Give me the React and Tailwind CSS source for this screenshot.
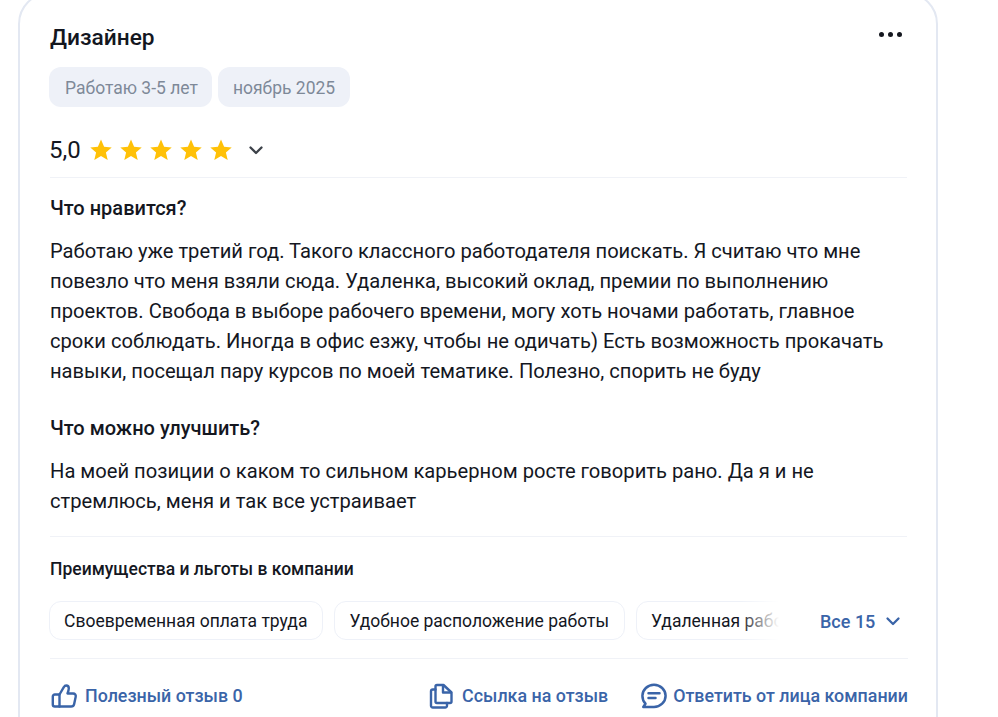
import React from 'react';

const Star = () => (
  <svg width="24" height="24" viewBox="0 0 24 24" className="block">
    <path d="M12 1.600l3.100 7.200 7.600.7-5.800 5 1.800 7.600L12 18.100l-6.700 4 1.800-7.600-5.800-5 7.600-.7z" fill="#ffc107" />
  </svg>
);

const Chevron = ({ color, size = 18 }) => (
  <svg width={size} height={size} viewBox="0 0 18 18" fill="none" className="block">
    <path d="M3.500 6.500L9 12l5.500-5.500" stroke={color} strokeWidth="2.300" strokeLinecap="round" strokeLinejoin="round" />
  </svg>
);

const ThumbIcon = () => (
  <svg width="28" height="28" viewBox="0 0 28 28" fill="none" stroke="#3a64a8" strokeWidth="2.400" strokeLinejoin="round" strokeLinecap="round" className="block">
    <path d="M9.500 12.500v12H4.800a2 2 0 0 1-2-2v-8a2 2 0 0 1 2-2z" />
    <path d="M9.500 12.500l4.300-7.300c.6-1.100 1.500-1.700 2.400-1.700 1.500 0 2.600 1.200 2.600 2.800 0 1.700-.7 3.700-1.300 5.200h5.700c1.800 0 2.900 1.500 2.500 3.200l-1.600 7.500c-.4 1.700-1.700 2.300-3 2.300H9.500" />
  </svg>
);

const CopyIcon = () => (
  <svg width="26" height="26" viewBox="0 0 26 26" fill="none" stroke="#3a64a8" strokeWidth="2.400" strokeLinejoin="round" strokeLinecap="round" className="block">
    <path d="M9 2h6.500L23.500 9.500v9a1.500 1.500 0 0 1-1.500 1.500H9A1.500 1.500 0 0 1 7.500 18.500V3.500A1.500 1.500 0 0 1 9 2z" />
    <path d="M15 2.500v7h8" />
    <path d="M7.500 6.500H4.800A1.800 1.800 0 0 0 3 8.300v14.400A1.800 1.800 0 0 0 4.800 24.500h12.400a1.800 1.800 0 0 0 1.800-1.800V20" />
  </svg>
);

const ChatIcon = () => (
  <svg width="26" height="26" viewBox="0 0 26 26" fill="none" className="block">
    <path d="M13 1.800c6.300 0 11.600 4.900 11.600 11S19.300 24 13 24H2.300l2.200-3.300C2.600 18.800 1.400 16 1.400 12.800 1.400 6.700 6.700 1.800 13 1.800z" stroke="#3a64a8" strokeWidth="2.500" strokeLinejoin="round" />
    <path d="M7.500 10.300h11M7.500 15h7" stroke="#3a64a8" strokeWidth="2.500" strokeLinecap="round" />
  </svg>
);

const perks = ['Своевременная оплата труда', 'Удобное расположение работы', 'Удаленная работа'];

const App = () => {
  return (
    <div className="h-[717px] overflow-hidden bg-white font-['Roboto',sans-serif] text-[#14171f]">
      <div className="ml-[18px] -mt-[8px] w-[920px] rounded-[32px] border-2 border-[#e3e8f2] pt-[28px] pl-[30px] pr-[29px] pb-10">
        <div className="flex items-center justify-between h-[32px]">
          <h2 className="text-[22.7px] leading-[32px] font-medium">Дизайнер</h2>
          <div className="flex gap-[4px] mr-[5px] -mt-[8px]">
            <span className="w-[5px] h-[5px] rounded-full bg-[#14171f]" />
            <span className="w-[5px] h-[5px] rounded-full bg-[#14171f]" />
            <span className="w-[5px] h-[5px] rounded-full bg-[#14171f]" />
          </div>
        </div>

        <div className="flex gap-[6px] mt-[13px] -ml-px">
          <span className="h-10 pl-4 pr-[14px] pt-[2px] flex items-center rounded-xl bg-[#eef1f8] text-[#7e8998] text-[17.5px]">Работаю 3-5 лет</span>
          <span className="h-10 pl-[15px] pr-[15px] pt-[2px] flex items-center rounded-xl bg-[#eef1f8] text-[#7e8998] text-[17.5px]">ноябрь 2025</span>
        </div>

        <div className="flex items-center mt-[27px] h-[32px] -ml-px">
          <span className="text-[24px] leading-[32px] mr-[8px] font-[450]">5,0</span>
          <div className="flex gap-[6px]">
            <Star /><Star /><Star /><Star /><Star />
          </div>
          <span className="ml-[14px]"><Chevron color="#3d4249" /></span>
        </div>

        <div className="border-t border-[#f0f2f7] mt-[11px] pt-[15px]">
          <h3 className="text-[20px] leading-[30px] font-medium">Что нравится?</h3>
          <p className="mt-[13px] text-[20.17px] leading-[30px] whitespace-nowrap">
            Работаю уже третий год. Такого классного работодателя поискать. Я считаю что мне<br />
            повезло что меня взяли сюда. Удаленка, высокий оклад, премии по выполнению<br />
            проектов. Свобода в выборе рабочего времени, могу хоть ночами работать, главное<br />
            сроки соблюдать. Иногда в офис езжу, чтобы не одичать) Есть возможность прокачать<br />
            навыки, посещал пару курсов по моей тематике. Полезно, спорить не буду
          </p>
          <h3 className="mt-[27px] text-[20px] leading-[30px] font-medium">Что можно улучшить?</h3>
          <p className="mt-[13px] text-[20.17px] leading-[30px] whitespace-nowrap">
            На моей позиции о каком то сильном карьерном росте говорить рано. Да я и не<br />
            стремлюсь, меня и так все устраивает
          </p>
        </div>

        <div className="border-t border-[#f0f2f7] mt-[20px] pt-[20px]">
          <h4 className="text-[17.5px] leading-[24px] font-medium">Преимущества и льготы в компании</h4>
          <div className="flex items-center mt-[20px] -ml-px">
            <div className="relative w-[730px] overflow-hidden flex gap-[11.5px]">
              {perks.map(p => (
                <span key={p} className="shrink-0 h-[39px] pl-[14px] pr-[14.5px] pt-[2px] flex items-center rounded-xl border border-[#eef1f8] text-[17.5px] whitespace-nowrap">{p}</span>
              ))}
              <div className="absolute right-0 top-0 bottom-0 w-[40px] bg-gradient-to-r from-transparent to-white" />
            </div>
            <span className="ml-[41px] pt-[1px] text-[18px] font-medium text-[#3a64a8]">Все 15</span>
            <span className="ml-[9px]"><Chevron color="#3a64a8" /></span>
          </div>
        </div>

        <div className="border-t border-[#f0f2f7] mt-[18px] pt-[23px] -mr-px flex items-center justify-between text-[17.85px] font-medium text-[#3a64a8]">
          <div className="flex items-center gap-[7px]">
            <ThumbIcon />
            <span>Полезный отзыв 0</span>
          </div>
          <div className="flex items-center">
            <div className="flex items-center gap-[8px]">
              <CopyIcon />
              <span>Ссылка на отзыв</span>
            </div>
            <div className="flex items-center gap-[6px] ml-[33px]">
              <ChatIcon />
              <span>Ответить от лица компании</span>
            </div>
          </div>
        </div>
      </div>
    </div>
  );
};

export default App;
